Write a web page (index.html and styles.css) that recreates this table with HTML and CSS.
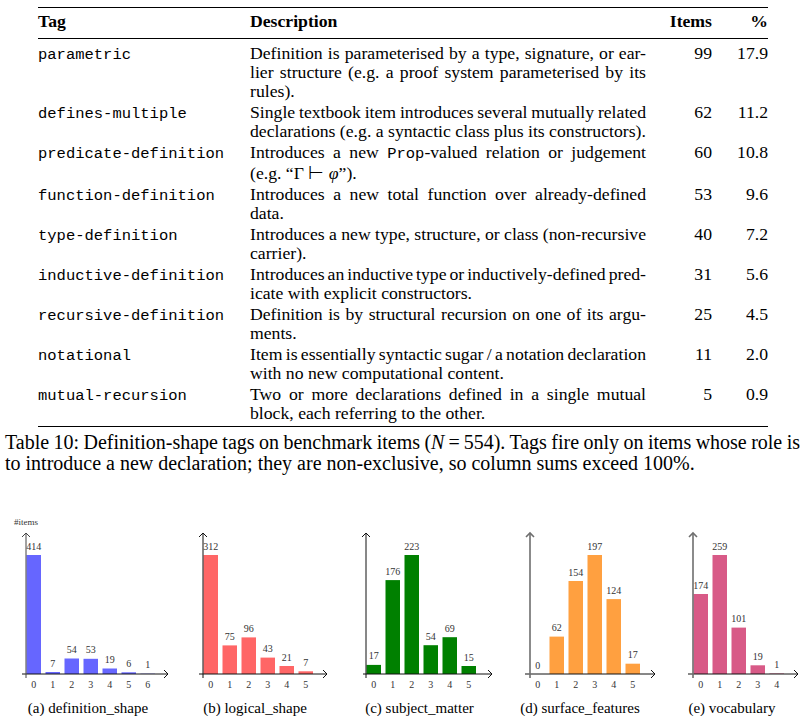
FILE: index.html
```html
<!DOCTYPE html>
<html lang="en">
<head>
   <meta charset="UTF-8">
   <meta name="viewport" content="width=device-width, initial-scale=1.0">
   <title>Definition-shape tags</title>
   <link rel="stylesheet" href="styles.css">
</head>
<body>

<div class="page">
   <table class="tags">
       <colgroup>
           <col class="col-tag">
           <col class="col-desc">
           <col class="col-items">
           <col class="col-pct">
       </colgroup>
       <thead>
           <tr><th>Tag</th><th>Description</th><th class="num">Items</th><th class="num">%</th></tr>
       </thead>
       <tbody>
           <tr class="first">
               <td><code>parametric</code></td>
               <td><span class="ln">Definition is parameterised by a type, signature, or ear-</span><span class="ln">lier structure (e.g. a proof system parameterised by its</span><span class="ln end">rules).</span></td>
               <td class="num">99</td><td class="num">17.9</td>
           </tr>
           <tr>
               <td><code>defines-multiple</code></td>
               <td><span class="ln">Single textbook item introduces several mutually related</span><span class="ln end">declarations (e.g. a syntactic class plus its constructors).</span></td>
               <td class="num">62</td><td class="num">11.2</td>
           </tr>
           <tr>
               <td><code>predicate-definition</code></td>
               <td><span class="ln">Introduces a new <code>Prop</code>-valued relation or judgement</span><span class="ln end">(e.g. &ldquo;&Gamma; &#8866; <i>&phi;</i>&rdquo;).</span></td>
               <td class="num">60</td><td class="num">10.8</td>
           </tr>
           <tr>
               <td><code>function-definition</code></td>
               <td><span class="ln">Introduces a new total function over already-defined</span><span class="ln end">data.</span></td>
               <td class="num">53</td><td class="num">9.6</td>
           </tr>
           <tr>
               <td><code>type-definition</code></td>
               <td><span class="ln">Introduces a new type, structure, or class (non-recursive</span><span class="ln end">carrier).</span></td>
               <td class="num">40</td><td class="num">7.2</td>
           </tr>
           <tr>
               <td><code>inductive-definition</code></td>
               <td><span class="ln">Introduces an inductive type or inductively-defined pred-</span><span class="ln end">icate with explicit constructors.</span></td>
               <td class="num">31</td><td class="num">5.6</td>
           </tr>
           <tr>
               <td><code>recursive-definition</code></td>
               <td><span class="ln">Definition is by structural recursion on one of its argu-</span><span class="ln end">ments.</span></td>
               <td class="num">25</td><td class="num">4.5</td>
           </tr>
           <tr>
               <td><code>notational</code></td>
               <td><span class="ln">Item is essentially syntactic sugar / a notation declaration</span><span class="ln end">with no new computational content.</span></td>
               <td class="num">11</td><td class="num">2.0</td>
           </tr>
           <tr class="last">
               <td><code>mutual-recursion</code></td>
               <td><span class="ln">Two or more declarations defined in a single mutual</span><span class="ln end">block, each referring to the other.</span></td>
               <td class="num">5</td><td class="num">0.9</td>
           </tr>
       </tbody>
   </table>

   <p class="caption"><span class="ln">Table 10: Definition-shape tags on benchmark items (<i>N</i>&#8239;=&#8239;554). Tags fire only on items whose role is</span><span class="ln end">to introduce a new declaration; they are non-exclusive, so column sums exceed 100%.</span></p>

   <div class="figures">
       <!-- (a) definition_shape -->
       <div class="fig fig-a">
           <svg class="plot" width="168" height="180">
               <g transform="translate(22,0)">
                   <text class="ylabel" x="0" y="9">#items</text>
                   <g class="bars" fill="#6666ff">
                       <rect x="0.5" y="39" width="14.5" height="119"/>
                       <rect x="19.5" y="156" width="14.5" height="2"/>
                       <rect x="38.5" y="142.5" width="14.5" height="15.5"/>
                       <rect x="57.5" y="142.8" width="14.5" height="15.2"/>
                       <rect x="76.5" y="152.5" width="14.5" height="5.5"/>
                       <rect x="95.5" y="156.3" width="14.5" height="1.7"/>
                       <rect x="114.5" y="157.7" width="14.5" height="0.3"/>
                   </g>
                   <g class="vals">
                       <text x="7.75" y="33.5">414</text>
                       <text x="26.75" y="150.5">7</text>
                       <text x="45.75" y="137">54</text>
                       <text x="64.75" y="137.3">53</text>
                       <text x="83.75" y="147">19</text>
                       <text x="102.75" y="150.8">6</text>
                       <text x="121.75" y="152.2">1</text>
                   </g>
                   <g class="ticks">
                       <text x="7.75" y="172">0</text>
                       <text x="26.75" y="172">1</text>
                       <text x="45.75" y="172">2</text>
                       <text x="64.75" y="172">3</text>
                       <text x="83.75" y="172">4</text>
                       <text x="102.75" y="172">5</text>
                       <text x="121.75" y="172">6</text>
                   </g>
                   <g class="axis">
                       <line x1="-4" y1="158" x2="142" y2="158"/>
                       <polyline points="138,154 142,158 138,162"/>
                   </g>
                   <g class="axis axis-y">
                       <line x1="0" y1="162" x2="0" y2="17"/>
                       <polyline points="-4,21 0,17 4,21"/>
                   </g>
               </g>
           </svg>
           <div class="subcap">(a) definition_shape</div>
       </div>

       <!-- (b) logical_shape -->
       <div class="fig fig-b">
           <svg class="plot" width="166" height="180">
               <g transform="translate(31,0)">
                   <g class="bars" fill="#ff6666">
                       <rect x="0.5" y="39" width="14.5" height="119"/>
                       <rect x="19.5" y="129.4" width="14.5" height="28.6"/>
                       <rect x="38.5" y="121.4" width="14.5" height="36.6"/>
                       <rect x="57.5" y="141.6" width="14.5" height="16.4"/>
                       <rect x="76.5" y="150" width="14.5" height="8"/>
                       <rect x="95.5" y="155.3" width="14.5" height="2.7"/>
                   </g>
                   <g class="vals">
                       <text x="7.75" y="33.5">312</text>
                       <text x="26.75" y="123.9">75</text>
                       <text x="45.75" y="115.9">96</text>
                       <text x="64.75" y="136.1">43</text>
                       <text x="83.75" y="144.5">21</text>
                       <text x="102.75" y="149.8">7</text>
                   </g>
                   <g class="ticks">
                       <text x="7.75" y="172">0</text>
                       <text x="26.75" y="172">1</text>
                       <text x="45.75" y="172">2</text>
                       <text x="64.75" y="172">3</text>
                       <text x="83.75" y="172">4</text>
                       <text x="102.75" y="172">5</text>
                   </g>
                   <g class="axis">
                       <line x1="-4" y1="158" x2="124" y2="158"/>
                       <polyline points="120,154 124,158 120,162"/>
                       <line x1="0" y1="162" x2="0" y2="17"/>
                       <polyline points="-4,21 0,17 4,21"/>
                   </g>
               </g>
           </svg>
           <div class="subcap">(b) logical_shape</div>
       </div>

       <!-- (c) subject_matter -->
       <div class="fig fig-c">
           <svg class="plot" width="163" height="180">
               <g transform="translate(28,0)">
                   <g class="bars" fill="#008000">
                       <rect x="0.5" y="148.9" width="14.5" height="9.1"/>
                       <rect x="19.5" y="64.1" width="14.5" height="93.9"/>
                       <rect x="38.5" y="39" width="14.5" height="119"/>
                       <rect x="57.5" y="129.2" width="14.5" height="28.8"/>
                       <rect x="76.5" y="121.2" width="14.5" height="36.8"/>
                       <rect x="95.5" y="150" width="14.5" height="8"/>
                   </g>
                   <g class="vals">
                       <text x="7.75" y="143.4">17</text>
                       <text x="26.75" y="58.6">176</text>
                       <text x="45.75" y="33.5">223</text>
                       <text x="64.75" y="123.7">54</text>
                       <text x="83.75" y="115.7">69</text>
                       <text x="102.75" y="144.5">15</text>
                   </g>
                   <g class="ticks">
                       <text x="7.75" y="172">0</text>
                       <text x="26.75" y="172">1</text>
                       <text x="45.75" y="172">2</text>
                       <text x="64.75" y="172">3</text>
                       <text x="83.75" y="172">4</text>
                       <text x="102.75" y="172">5</text>
                   </g>
                   <g class="axis">
                       <line x1="-3" y1="158" x2="126" y2="158"/>
                       <polyline points="122,154 126,158 122,162"/>
                       <line x1="0" y1="162" x2="0" y2="17"/>
                       <polyline points="-4,21 0,17 4,21"/>
                   </g>
               </g>
           </svg>
           <div class="subcap">(c) subject_matter</div>
       </div>

       <!-- (d) surface_features -->
       <div class="fig fig-d">
           <svg class="plot" width="158" height="180">
               <g transform="translate(29,0)">
                   <g class="bars" fill="#ffa040">
                       <rect x="19.5" y="120.6" width="14.5" height="37.4"/>
                       <rect x="38.5" y="65" width="14.5" height="93"/>
                       <rect x="57.5" y="39" width="14.5" height="119"/>
                       <rect x="76.5" y="83.1" width="14.5" height="74.9"/>
                       <rect x="95.5" y="147.7" width="14.5" height="10.3"/>
                   </g>
                   <g class="vals">
                       <text x="7.75" y="152.5">0</text>
                       <text x="26.75" y="115">62</text>
                       <text x="45.75" y="59.5">154</text>
                       <text x="64.75" y="33.5">197</text>
                       <text x="83.75" y="77.6">124</text>
                       <text x="102.75" y="142.2">17</text>
                   </g>
                   <g class="ticks">
                       <text x="7.75" y="172">0</text>
                       <text x="26.75" y="172">1</text>
                       <text x="45.75" y="172">2</text>
                       <text x="64.75" y="172">3</text>
                       <text x="83.75" y="172">4</text>
                       <text x="102.75" y="172">5</text>
                   </g>
                   <g class="axis">
                       <line x1="-5" y1="158" x2="125" y2="158"/>
                       <polyline points="121,154 125,158 121,162"/>
                   </g>
                   <g class="axis axis-soft">
                       <line x1="0" y1="162" x2="0" y2="17"/>
                       <polyline points="-4,21 0,17 4,21"/>
                   </g>
               </g>
           </svg>
           <div class="subcap">(d) surface_features</div>
       </div>

       <!-- (e) vocabulary -->
       <div class="fig fig-e">
           <svg class="plot" width="146" height="180">
               <g transform="translate(34,0)">
                   <g class="bars" fill="#d85a87">
                       <rect x="0.5" y="78" width="14.5" height="80"/>
                       <rect x="19.5" y="39" width="14.5" height="119"/>
                       <rect x="38.5" y="111.6" width="14.5" height="46.4"/>
                       <rect x="57.5" y="149.3" width="14.5" height="8.7"/>
                       <rect x="76.5" y="157.5" width="14.5" height="0.5"/>
                   </g>
                   <g class="vals">
                       <text x="7.75" y="72.5">174</text>
                       <text x="26.75" y="33.5">259</text>
                       <text x="45.75" y="106.1">101</text>
                       <text x="64.75" y="143.8">19</text>
                       <text x="83.75" y="152">1</text>
                   </g>
                   <g class="ticks">
                       <text x="7.75" y="172">0</text>
                       <text x="26.75" y="172">1</text>
                       <text x="45.75" y="172">2</text>
                       <text x="64.75" y="172">3</text>
                       <text x="83.75" y="172">4</text>
                   </g>
                   <g class="axis">
                       <line x1="-5" y1="158" x2="105" y2="158"/>
                       <polyline points="101,154 105,158 101,162"/>
                   </g>
                   <g class="axis axis-soft">
                       <line x1="0" y1="162" x2="0" y2="17"/>
                       <polyline points="-4,21 0,17 4,21"/>
                   </g>
               </g>
           </svg>
           <div class="subcap">(e) vocabulary</div>
       </div>
   </div>
</div>

</body>
</html>
```

FILE: styles.css
```css
body {
    margin: 0;
    font-family: "Liberation Serif", "Times New Roman", serif;
    color: #000;
    background-color: #fff;
}
.page {
    width: 805px;
}
code {
    font-family: "Liberation Mono", "Courier New", monospace;
    font-size: 15.5px;
}
/* one typeset line; full lines are stretched, squeezed spaces first like TeX */
.ln {
    display: block;
    word-spacing: -1.6px;
    text-align: justify;
    text-align-last: justify;
}
.ln.end {
    word-spacing: normal;
    text-align-last: left;
}

/* table */
.tags {
    margin: 7px 0 0 38px;
    width: 730px;
    border-collapse: collapse;
    table-layout: fixed;
    font-size: 17.7px;
    line-height: 19.3px;
    border-top: 1.5px solid #000;
    border-bottom: 1.5px solid #000;
}
.col-tag { width: 212px; }
.col-desc { width: 396px; }
.col-items { width: 66px; }
.col-pct { width: 56px; }
.tags th {
    font-weight: bold;
    text-align: left;
    padding: 4px 0 6.3px;
    border-bottom: 1px solid #000;
}
.tags td {
    padding: 0.7px 0;
    vertical-align: top;
}
.tags .num {
    text-align: right;
}
.tags tr.first td {
    padding-top: 5px;
}
.tags tr.last td {
    padding-bottom: 2.5px;
}

/* caption */
.caption {
    margin: 5px 5px 0;
    width: 795px;
    font-size: 20px;
    line-height: 21px;
}
.caption .ln {
    word-spacing: -2.2px;
}
.caption .ln.end {
    word-spacing: normal;
}

/* bar charts */
.figures {
    display: flex;
    margin: 42px 0 0 4px;
}
.fig {
    flex: none;
    display: flex;
    flex-direction: column;
    align-items: center;
}
.fig-a { width: 168px; }
.fig-b { width: 166px; }
.fig-c { width: 163px; }
.fig-d { width: 158px; }
.fig-e { width: 146px; }
.plot {
    display: block;
    font-family: "Liberation Serif", "Times New Roman", serif;
}
.plot text {
    font-size: 10px;
    fill: #333;
    text-anchor: middle;
}
.plot .ylabel {
    font-size: 9px;
}
.axis line,
.axis polyline {
    stroke: #111;
    stroke-width: 1;
    fill: none;
}
.axis-y line,
.axis-y polyline {
    stroke: #444;
}
.axis-soft line,
.axis-soft polyline {
    stroke: #6e6e6e;
    stroke-width: 1.6;
}
.subcap {
    margin-top: 4px;
    font-size: 15px;
    line-height: 16px;
    align-self: stretch;
    text-align: center;
}
```
